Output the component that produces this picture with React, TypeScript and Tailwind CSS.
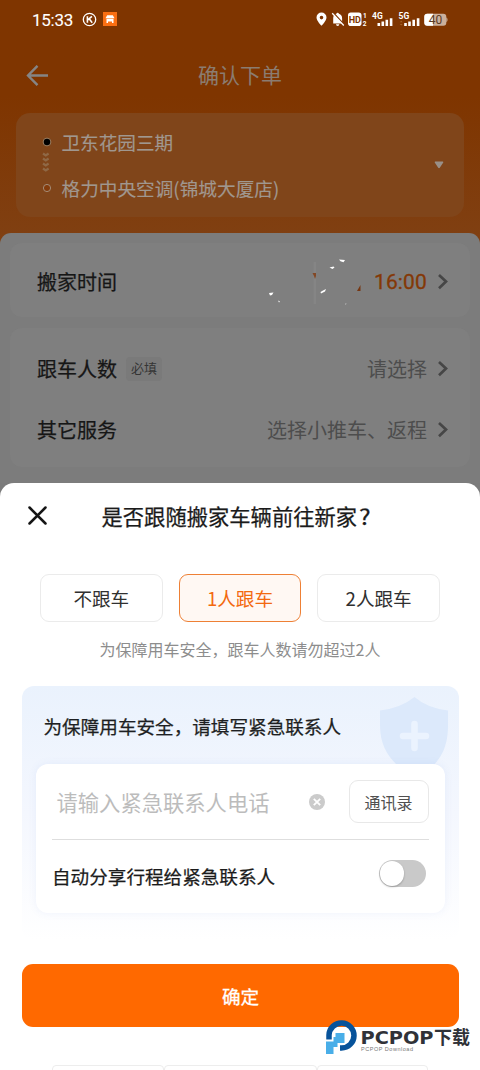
import { useState } from "react";

const COMPANIONS = ["不跟车", "1人跟车", "2人跟车"];

function StatusBar() {
  return (
    <div className="flex h-[38px] items-center justify-between pl-8 pr-[32px] text-white">
      <div className="flex items-center pt-[2px]">
        <span className="w-[41px] whitespace-nowrap font-['Roboto',sans-serif] text-[17px] leading-5 tracking-[-0.25px] [-webkit-text-stroke:0.1px]">15:33</span>
        <svg className="mb-[2px] ml-[9px]" width="15" height="15" viewBox="0 0 15 15" fill="none" stroke="currentColor">
          <circle cx="7.5" cy="7.5" r="6.2" strokeWidth="1.3" />
          <path d="M5.4 4.3v6.4M9.9 4.3 5.8 7.8M7.2 6.8l3 3.9" strokeWidth="1.6" />
        </svg>
        <svg className="mb-[2px] ml-[6px]" width="14" height="14" viewBox="0 0 14 14">
          <rect width="14" height="14" fill="#fa6f12" />
          <path d="M4.2 3.2h5.600l1.700 3H2.500z" fill="#fff" />
          <path d="M3.500 6.800h7V11H9V9.600H5V11H3.500z" fill="#fff" />
        </svg>
      </div>
      <div className="flex items-center">
        <svg width="132" height="18" viewBox="0 0 132 18" fill="#fff">
          <path fillRule="evenodd" d="M5.500 2.500a5 5 0 0 0-5 5c0 3.400 5 8.300 5 8.300s5-4.900 5-8.300a5 5 0 0 0-5-5zm0 3.300a1.800 1.800 0 1 1 0 3.600 1.800 1.800 0 0 1 0-3.600z" />
          <path d="M17.200 13.500V8.200a4.600 4.600 0 0 1 3.200-4.500 1.300 1.300 0 0 1 2.500 0 4.600 4.600 0 0 1 3.200 4.500v5.300zM20 14.300h3.300a1.600 1.600 0 0 1-3.300 0z" />
          <path d="M17.500 3 29 15.500" stroke="#7f3500" strokeWidth="1.500" />
          <path d="m16.200 3.200 11.600 12.300" stroke="#fff" strokeWidth="1.300" />
          <rect x="32" y="2.500" width="13.500" height="13.500" rx="2.800" />
          <text x="38.800" y="12.800" textAnchor="middle" fontFamily="Roboto, sans-serif" fontWeight="700" fontSize="9" fill="#7f3500">HD</text>
          <text x="47" y="8" fontFamily="Roboto, sans-serif" fontWeight="700" fontSize="6.500">1</text>
          <text x="46.800" y="16" fontFamily="Roboto, sans-serif" fontWeight="700" fontSize="6.500">2</text>
          <text x="56" y="8.800" fontFamily="Roboto, sans-serif" fontWeight="700" fontSize="8.500">4G</text>
          <path d="M61.500 13h2.600v3h-2.600zM65.500 11.500h2.600V16h-2.600zM69.500 9.800h2.600V16h-2.600zM73.800 8.200h2.600V16h-2.600z" />
          <text x="82.500" y="8.800" fontFamily="Roboto, sans-serif" fontWeight="700" fontSize="8.500">5G</text>
          <path d="M83.800 12.300 85.200 10.800l1.400 1.500zM83.800 14l1.400 1.500 1.400-1.500z" fill="#a9672b" />
          <path d="M88.200 13h2.600v3h-2.600zM92.200 11.500h2.600V16h-2.600zM96.400 9.800h2.600V16h-2.600zM100.800 8.200h2.600V16h-2.600z" />
          <rect x="108.300" y="3.800" width="22" height="12" rx="3" fill="#cbb09c" />
          <path d="M130.300 7.500c1.600.3 1.600 4.300 0 4.600z" fill="#cbb09c" />
          <path d="M111.300 3.800h5.700v12h-5.700a3 3 0 0 1-3-3v-6a3 3 0 0 1 3-3z" />
          <text x="119.600" y="14" textAnchor="middle" fontFamily="Roboto, sans-serif" fontSize="12" fill="#5c3a22">40</text>
        </svg>
      </div>
    </div>
  );
}

function Chevron() {
  return (
    <svg className="ml-[11px]" width="10" height="16" viewBox="0 0 10 16" fill="none" stroke="#464646" strokeWidth="2.700">
      <path d="m1 1 7 6.600-7 6.600" />
    </svg>
  );
}

function RouteCard() {
  return (
    <div className="mx-4 flex h-[104px] items-center justify-between rounded-[14px] bg-[#80451a] pl-[26px] pr-[20px] text-[18.6px] text-[#a0978f]">
      <div className="flex items-center">
        <svg width="10" height="60" viewBox="0 0 10 60">
          <circle cx="5" cy="7" r="3.900" fill="#000" stroke="#a08061" strokeWidth="1" />
          <g fill="none" stroke="#8f6846" strokeWidth="2.200">
            <path d="m1 18.500 2.800 2L6.600 18.500M1 23.500l2.800 2L6.600 23.500M1 28.500l2.800 2L6.600 28.500M1 33.500l2.800 2L6.600 33.500" />
          </g>
          <circle cx="5" cy="53" r="3.600" fill="#833b0b" stroke="#a48c77" strokeWidth="1" />
        </svg>
        <div className="ml-[9.500px] flex flex-col gap-[18px] leading-7 [-webkit-text-stroke:0.15px]">
          <span className="whitespace-nowrap">卫东花园三期</span>
          <span className="whitespace-nowrap tracking-[0.05px]">格力中央空调(锦城大厦店)</span>
        </div>
      </div>
      <svg width="10" height="8" viewBox="0 0 10 8" fill="#999088">
        <path d="M1.200.5h7.600q1 .4.3 1.300L5.800 6.800q-.8.8-1.600 0L.9 1.800Q.2.9 1.200.5" />
      </svg>
    </div>
  );
}

function OrderForm() {
  return (
    <div className="mt-4 h-[250px] rounded-t-[11px] bg-[#7c7c7c] px-[10px] pt-[10px] text-[20px] text-[#161616]">
      <div className="flex h-[74px] items-center rounded-xl bg-[#7f7f7f] pl-[27px] pr-[22px] pt-1">
        <span className="[-webkit-text-stroke:0.25px]">搬家时间</span>
        <svg className="ml-auto" width="104" height="50" viewBox="0 0 104 50">
          <path d="M51.500 5h2.500v42h-2.500z" fill="#858585" />
          <path d="m7 36 4.500-.5-1.500 2.500-2 .5zM16 43.500l2 1-1 1zM67.500 10.500l4-1 1 1-2 1.500zM77 2.500l6 .5-1.500 2.200-3-1zM58.500 35l2.500-1.500 3-1.500-1 2.500-4 2zM83.500 46.500l1 .2-1 1z" fill="#fff" />
          <path d="M50.500 16h3.500v3l-1 3-1-3z" fill="#834825" />
          <path d="M98.500 28v6h-3.500z" fill="#763712" />
        </svg>
        <span className="ml-[8px] w-[53px] whitespace-nowrap pt-[2px] font-['Roboto','Noto_Sans_CJK_SC',sans-serif] text-[21px] tracking-[0.1px] text-[#843806] [-webkit-text-stroke:0.3px]">16:00</span>
        <Chevron />
      </div>
      <div className="mt-[11px] flex h-[139px] flex-col rounded-xl bg-[#7f7f7f] pl-[27px] pr-[22px] pt-[10px]">
        <div className="flex h-[61px] items-center">
          <span className="[-webkit-text-stroke:0.25px]">跟车人数</span>
          <span className="ml-[9px] flex h-[24px] w-[36px] items-center justify-center rounded bg-[#7a7a7a] pb-[2px] text-[13px] text-[#353535]">必填</span>
          <span className="ml-auto text-[#4d4d4d]">请选择</span>
          <Chevron />
        </div>
        <div className="flex h-[61px] items-center">
          <span className="[-webkit-text-stroke:0.25px]">其它服务</span>
          <span className="ml-auto text-[#4d4d4d]">选择小推车、返程</span>
          <Chevron />
        </div>
      </div>
    </div>
  );
}

function EmergencyContact() {
  const [share, setShare] = useState(false);

  return (
    <div className="relative mx-[21.500px] mt-[25px] h-[254px] rounded-xl bg-gradient-to-b from-[#eaf2fd] via-[#f4f7fe] to-white px-[14px]">
      <svg className="absolute right-[10px] top-[11px]" width="70" height="68" viewBox="0 0 70 68">
        <path d="M35.500 0Q48 11 69 13.500V28C69 50 62 60 55 68H18C8 58 1 47 1 28V13.500Q22 11 35.500 0" fill="#dce9fb" />
        <path d="M35.500 27v24M24 39h23" stroke="#ebf3fe" strokeWidth="6.500" strokeLinecap="round" />
      </svg>
      <h3 className="relative flex h-[78px] items-center pl-[8px] pt-px text-[18.6px] text-[#1d1f22] [-webkit-text-stroke:0.25px]">
        为保障用车安全，请填写紧急联系人
      </h3>
      <div className="relative h-[149px] rounded-xl bg-white px-4 shadow-[0_0_8px_rgba(80,120,220,0.08)]">
        <div className="flex h-[76px] items-center border-b-[1.500px] border-[#dedede]">
          <span className="ml-[5px] whitespace-nowrap text-[21.3px] text-[#bcbcbc]">请输入紧急联系人电话</span>
          <svg className="ml-auto" width="16" height="16" viewBox="0 0 16 16">
            <circle cx="8" cy="8" r="8" fill="#cbcbcb" />
            <path d="m4.800 4.800 6.400 6.400m0-6.400-6.400 6.400" stroke="#fff" strokeWidth="1.800" />
          </svg>
          <button className="ml-[24px] flex h-[43px] w-[80px] items-center justify-center rounded-[9px] border border-[#e8e8e8] text-[16px] text-[#505050]">
            通讯录
          </button>
        </div>
        <div className="flex h-[73px] items-center justify-between pl-[0.500px] pr-[3px]">
          <span className="pb-px text-[18.6px] text-[#1b1b1b] [-webkit-text-stroke:0.25px]">自动分享行程给紧急联系人</span>
          <button
            className={`mb-[6px] flex h-[27px] w-[47px] items-center rounded-full p-px ${share ? "justify-end bg-[#ff6900]" : "bg-[#c9c9c9]"}`}
            onClick={() => setShare(!share)}
          >
            <span className="size-[24.500px] rounded-full bg-white shadow-[0_1px_2px_rgba(0,0,0,0.25)]" />
          </button>
        </div>
      </div>
    </div>
  );
}

function CompanionSheet() {
  const [selected, setSelected] = useState(1);

  return (
    <div className="bg-[#7b7b7b]">
      <div className="h-[587px] overflow-hidden rounded-t-[14px] bg-white">
        <div className="flex h-[66px] items-center pl-[28px]">
          <svg className="mb-[2px]" width="19" height="19" viewBox="0 0 19 19" stroke="#151515" strokeWidth="2.500" strokeLinecap="round">
            <path d="m1.500 1.500 16 16m0-16-16 16" />
          </svg>
          <h2 className="ml-[54.500px] whitespace-nowrap pb-px text-[21.3px] text-[#1b1b1b] [-webkit-text-stroke:0.25px]">
            是否跟随搬家车辆前往新家<span className="ml-[2px] inline-block origin-left scale-x-115">?</span>
          </h2>
        </div>
        <div className="mx-10 mt-[25px] grid grid-cols-3 gap-4">
          {COMPANIONS.map((label, i) => (
            <button
              key={label}
              onClick={() => setSelected(i)}
              className={`flex h-[48px] items-center justify-center rounded-[9px] border text-[18.6px] ${
                i === selected ? "border-[#ee8035] bg-[#fff8f3] text-[#f3690f]" : "border-[#ebebeb] text-[#303030]"
              }`}
            >
              {label}
            </button>
          ))}
        </div>
        <p className="mt-[15px] text-center text-[16px] leading-6 text-[#8d8d8d]">为保障用车安全，跟车人数请勿超过2人</p>
        <EmergencyContact />
        <button className="mx-[21.500px] mt-[24px] flex h-[63px] w-[437px] items-center justify-center rounded-[11px] bg-[#ff6900] pl-px text-[18.6px] text-white [-webkit-text-stroke:0.3px]">
          确定
        </button>
        <div className="ml-[52px] mt-[38px] flex h-[10px] w-[376px]">
          <div className="w-[112px] rounded-t border border-[#ededed]" />
          <div className="w-[153px] rounded-t border border-[#ededed]" />
          <div className="w-[111px] rounded-t border border-[#ededed]" />
        </div>
      </div>
    </div>
  );
}

function Watermark() {
  return (
    <div className="absolute left-[325px] top-[1019px]">
      <svg width="150" height="37" viewBox="0 0 150 37">
        <path d="M4 20.500V16A12.500 12.500 0 1 1 16.500 29H15" fill="none" stroke="#07539b" strokeWidth="5.500" />
        <path d="M10.500 14h9v10h-7v4H8.500v7H1V22.500h7.500V18h2z" fill="#49aee8" />
        <text x="35.500" y="24.500" fontFamily="'DejaVu Sans', sans-serif" fontWeight="700" fontSize="17" fill="#303238" textLength="73" lengthAdjust="spacingAndGlyphs">PCPOP</text>
        <text x="109" y="24.500" fontFamily="'Noto Sans CJK SC', sans-serif" fontWeight="700" fontSize="18" fill="#303238">下载</text>
        <text x="36" y="31.500" fontFamily="'Liberation Sans', sans-serif" fontSize="5.500" fill="#777" textLength="52">PCPOP Download</text>
      </svg>
    </div>
  );
}

export default function App() {
  return (
    <div className="relative h-[1070px] w-[480px] overflow-hidden bg-[#7f3500] font-['Noto_Sans_CJK_SC',sans-serif]">
      <div className="bg-gradient-to-b from-[#7f3500] from-20% to-[#804012] to-50%">
        <StatusBar />
        <div className="flex h-[75px] items-center px-[26px]">
          <svg width="23" height="22" viewBox="0 0 23 22" fill="none" stroke="#858585" strokeWidth="2.400">
            <path d="M22 10.500H2M11.500.8 2 10.500l9.500 9.700" />
          </svg>
          <h1 className="mr-[23px] flex-1 pb-px text-center text-[21px] text-[#8b7c70]">确认下单</h1>
        </div>
        <RouteCard />
        <OrderForm />
      </div>
      <CompanionSheet />
      <Watermark />
    </div>
  );
}
